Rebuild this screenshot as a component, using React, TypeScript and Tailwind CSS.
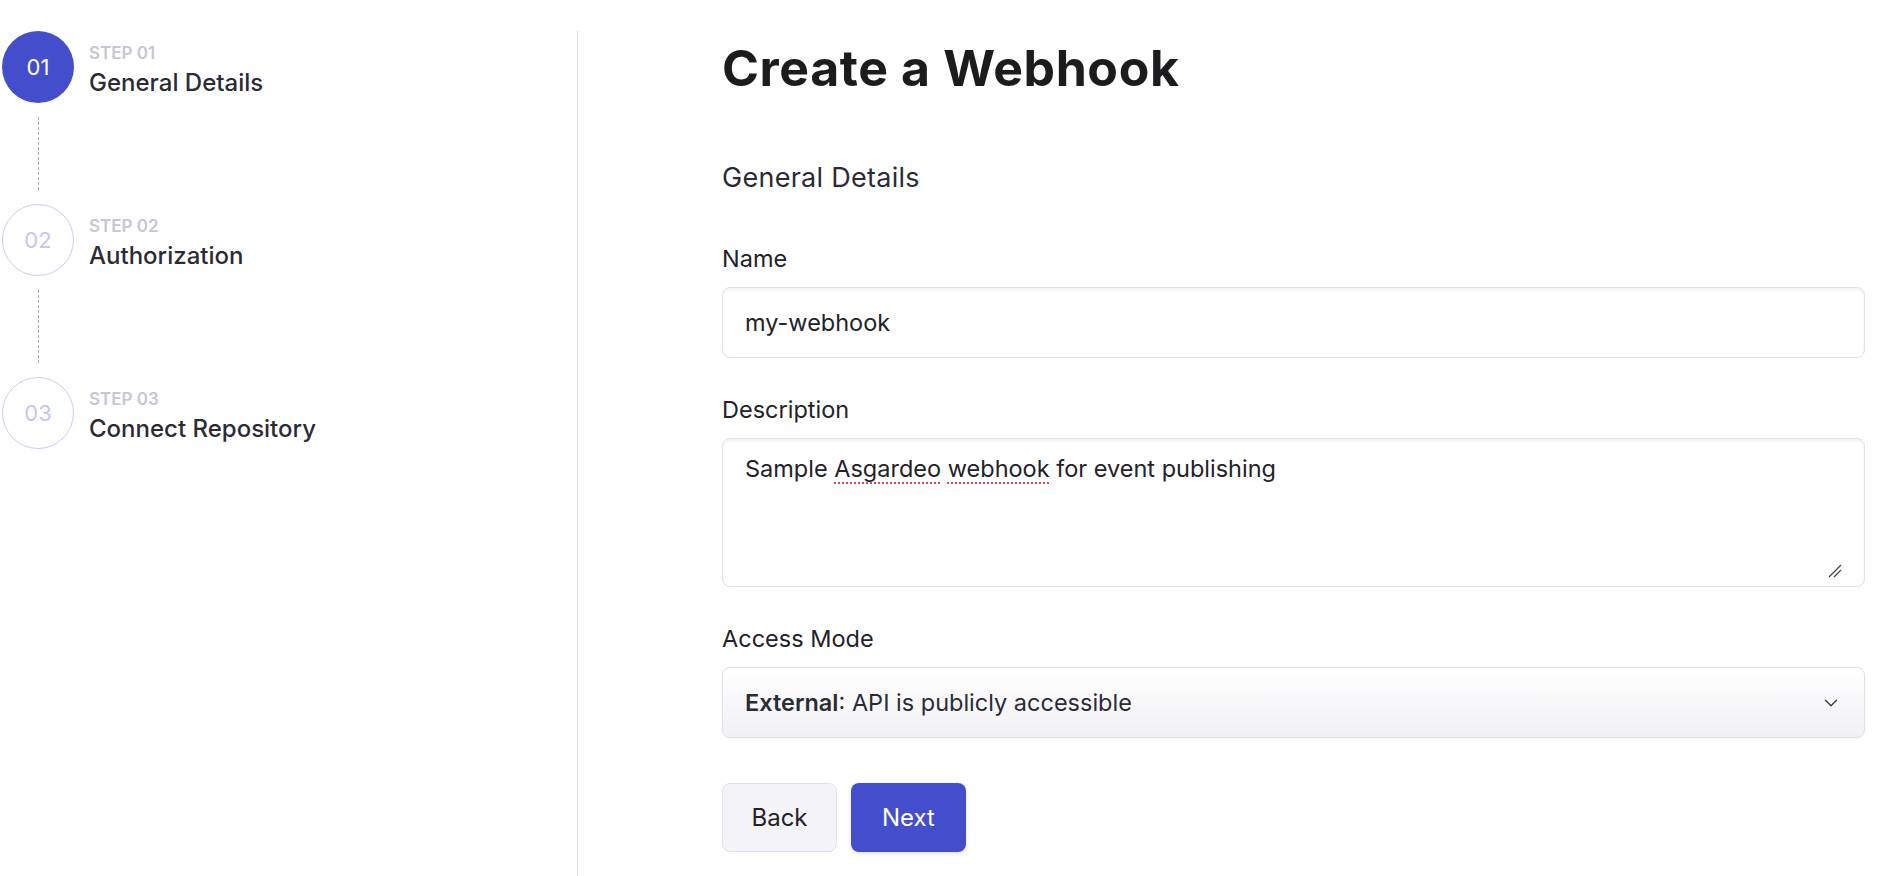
import { ChevronDown } from 'lucide-react';

const steps = [
  { num: '01', title: 'General Details', active: true },
  { num: '02', title: 'Authorization', active: false },
  { num: '03', title: 'Connect Repository', active: false },
];

function Stepper() {
  return (
    <div className="flex flex-col pl-[2px] pt-[31px]">
      {steps.map((step, i) => (
        <div key={step.num}>
          <div className="flex items-start gap-[15px]">
            <div
              className={`flex h-[72px] w-[72px] shrink-0 items-center justify-center rounded-full text-[22px] ${
                step.active
                  ? 'bg-[#444ecc] text-white'
                  : 'border border-[#c9ccf3] bg-white text-[#c3c7f1]'
              }`}
            >
              {step.num}
            </div>
            <div className="pt-[11px]">
              <div className="text-[17px] font-semibold leading-[22px] text-[#c6c7d5]">
                STEP {step.num}
              </div>
              <div className="mt-[5px] text-[24px] font-medium leading-[28px] text-[#2b2b35]">
                {step.title}
              </div>
            </div>
          </div>
          {i < steps.length - 1 && (
            <div className="ml-[36px] h-[101px] py-[14px]">
              <div className="h-full border-l border-dashed border-[#a9a9b3]" />
            </div>
          )}
        </div>
      ))}
    </div>
  );
}

function Field({ label, children }: { label: string; children: React.ReactNode }) {
  return (
    <div>
      <div className="mb-[14px] text-[23.5px] leading-[28px] text-[#222228]">{label}</div>
      {children}
    </div>
  );
}

export default function App() {
  return (
    <div className="flex h-[876px] bg-white font-['Inter',sans-serif] text-[#222228]">
      <aside className="w-[577px] shrink-0">
        <Stepper />
      </aside>
      <div className="mt-[31px] w-px bg-[#dfdfe6]" />
      <main className="flex-1 pl-[144px] pr-[15px] pt-[38px]">
        <h1 className="text-[50px] font-bold leading-[60px] tracking-[0.012em] text-[#1c1c1e]">
          Create a Webhook
        </h1>
        <h2 className="mt-[64px] text-[27px] leading-[32px] tracking-[0.01em] text-[#2b2b35]">
          General Details
        </h2>

        <div className="mt-[51px] flex flex-col gap-[38px]">
          <Field label="Name">
            <div className="flex h-[71px] items-center rounded-[8px] border border-[#e1e1e8] bg-white px-[22px] text-[23.5px] shadow-[inset_0_2px_3px_rgba(0,0,0,0.06)]">
              my-webhook
            </div>
          </Field>

          <Field label="Description">
            <div className="relative h-[149px] rounded-[8px] border border-[#e1e1e8] bg-white px-[22px] pt-[16px] text-[23.5px] leading-[28px] shadow-[inset_0_2px_3px_rgba(0,0,0,0.06)]">
              Sample{' '}
              <span className="underline decoration-[#e5484d] decoration-dotted decoration-2 underline-offset-[5px]">
                Asgardeo
              </span>{' '}
              <span className="underline decoration-[#e5484d] decoration-dotted decoration-2 underline-offset-[5px]">
                webhook
              </span>{' '}
              for event publishing
              <svg
                className="absolute bottom-[8px] right-[22px]"
                width="14"
                height="14"
                viewBox="0 0 14 14"
                fill="none"
                stroke="#444"
                strokeWidth="1.2"
              >
                <path d="M1 13 L13 1" />
                <path d="M6 13 L13 6" />
              </svg>
            </div>
          </Field>

          <Field label="Access Mode">
            <div className="flex h-[71px] items-center justify-between rounded-[8px] border border-[#e1e1e8] bg-gradient-to-b from-white to-[#f1f1f5] px-[22px] text-[23.5px] text-[#2b2b35] shadow-[0_1px_2px_rgba(0,0,0,0.05)]">
              <span>
                <span className="font-semibold">External</span>: API is publicly accessible
              </span>
              <ChevronDown className="h-[22px] w-[22px] text-[#3a3a42]" strokeWidth={1.5} />
            </div>
          </Field>
        </div>

        <div className="mt-[45px] flex gap-[14px]">
          <button className="h-[69px] w-[115px] rounded-[8px] border border-[#e1e1e8] bg-[#f4f4f8] text-[24px] text-[#222228]">
            Back
          </button>
          <button className="h-[69px] w-[115px] rounded-[8px] bg-[#444ecc] text-[24px] text-white shadow-[0_2px_4px_rgba(0,0,0,0.12)]">
            Next
          </button>
        </div>
      </main>
    </div>
  );
}
